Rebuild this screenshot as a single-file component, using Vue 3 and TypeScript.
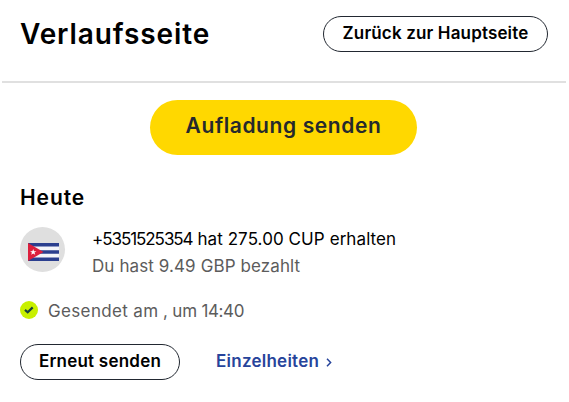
<script setup lang="ts">
interface Transfer {
  phone: string
  received: string
  paid: string
  time: string
}

const transfer: Transfer = {
  phone: '+5351525354',
  received: '275.00 CUP',
  paid: '9.49 GBP',
  time: '14:40',
}
</script>

<template>
  <main class="page">
    <header class="header">
      <h1 class="title">Verlaufsseite</h1>
      <button class="pill pill-back" type="button"><span>Zurück zur Hauptseite</span></button>
    </header>

    <div class="cta-row">
      <button class="cta" type="button"><span>Aufladung senden</span></button>
    </div>

    <section class="history">
      <h2 class="day">Heute</h2>
      <div class="entry">
        <div class="flag">
          <svg width="31" height="18" viewBox="0 0 31 19" preserveAspectRatio="none" aria-hidden="true">
            <rect width="31" height="19" fill="#f4f5fa" />
            <path d="M0 0h31v3.800H0zM0 7.600h31v3.800H0zM0 15.200h31V19H0z" fill="#2b3f8f" />
            <path d="M0 0l15.500 9.500L0 19z" fill="#dc1f3c" />
            <path d="M5.200 6.300l.8 2.300h2.400l-1.900 1.500.7 2.400-2-1.400-2 1.400.7-2.400L2 8.600h2.400z" fill="#fff" />
          </svg>
        </div>
        <div class="lines">
          <div class="received"><span class="phone">{{ transfer.phone }}</span> hat {{ transfer.received }} erhalten</div>
          <div class="paid">Du hast {{ transfer.paid }} bezahlt</div>
        </div>
      </div>

      <div class="status">
        <svg width="18" height="18" viewBox="0 0 18 18" aria-hidden="true">
          <circle cx="9" cy="9" r="9" fill="#c8f000" />
          <path d="M5 8.900l2.700 2.400 5-4.900" fill="none" stroke="#16423f" stroke-width="2.200" />
        </svg>
        <span class="status-text">Gesendet am<span class="tail"> , um </span><span class="time">{{ transfer.time }}</span></span>
      </div>

      <div class="actions">
        <button class="pill pill-resend" type="button"><span>Erneut senden</span></button>
        <a class="details">
          <span>Einzelheiten</span>
          <svg width="6" height="9" viewBox="0 0 6 9" aria-hidden="true">
            <path d="M1 .8l3.600 3.700L1 8.200" fill="none" stroke="#27449b" stroke-width="1.500" />
          </svg>
        </a>
      </div>
    </section>
  </main>
</template>

<style>
body {
  background: #fff;
}
</style>

<style scoped>
.page {
  box-sizing: border-box;
  width: 569px;
  height: 402px;
  overflow: hidden;
  padding: 0 3px 0 2px;
  background: #fff;
  color: #000;
  font-family: Inter, 'Liberation Sans', sans-serif;
  font-size: 17px;
  white-space: nowrap;
}

.header {
  box-sizing: border-box;
  display: flex;
  align-items: flex-start;
  justify-content: space-between;
  height: 83px;
  padding: 16px 18px 0;
  border-bottom: 2px solid #e0e0e0;
}

.title {
  margin: 0;
  font-size: 28px;
  font-weight: 600;
  letter-spacing: 0.9px;
  line-height: 36px;
}

button {
  box-sizing: border-box;
  display: flex;
  justify-content: center;
  margin: 0;
  padding: 0;
  border: 0;
  color: inherit;
  font-family: inherit;
}

.pill {
  height: 36px;
  border: 1px solid #222831;
  border-radius: 18px;
  background: #fff;
  font-size: 17px;
  font-weight: 600;
  line-height: 33px;
}

.pill-back {
  width: 225px;
  letter-spacing: 0.15px;
}

.cta-row {
  display: flex;
  justify-content: center;
  padding: 17px 1px 0 0;
}

.cta {
  width: 267px;
  height: 55px;
  border-radius: 28px;
  background: #ffd800;
  color: #25292d;
  font-size: 21px;
  font-weight: 600;
  letter-spacing: 0.6px;
  line-height: 51px;
}

.history {
  padding: 29px 18px 0;
}

.day {
  margin: 0;
  font-size: 21px;
  font-weight: 600;
  letter-spacing: 0.9px;
  line-height: 28px;
}

.entry {
  display: flex;
  gap: 27px;
  padding-top: 15px;
}

.flag {
  display: flex;
  flex: none;
  align-items: center;
  justify-content: center;
  box-sizing: border-box;
  width: 45px;
  height: 45px;
  padding: 5px 0 0 2px;
  border-radius: 50%;
  background: #dfdfdf;
}

.lines {
  height: 54px;
  margin-top: -1px;
  line-height: 27px;
}

.received {
  letter-spacing: 0.08px;
}

.phone {
  letter-spacing: -1.06px;
}

.paid {
  letter-spacing: 0.1px;
}

.paid,
.status {
  color: #5c5c5c;
}

.status {
  display: flex;
  align-items: center;
  gap: 10px;
  height: 24px;
  margin-top: 18px;
}

.status-text {
  padding-top: 1px;
  letter-spacing: 0.35px;
}

.tail {
  letter-spacing: -0.2px;
}

.time {
  letter-spacing: -0.4px;
}

.actions {
  display: flex;
  align-items: center;
  gap: 36px;
  margin-top: 22px;
}

.pill-resend {
  width: 160px;
  letter-spacing: 0.22px;
}

.details {
  display: flex;
  align-items: center;
  gap: 7px;
  padding-bottom: 2px;
  color: #27449b;
  font-weight: 600;
  letter-spacing: 0.25px;
  line-height: 33px;
}

.details svg {
  margin-top: 2px;
}
</style>
